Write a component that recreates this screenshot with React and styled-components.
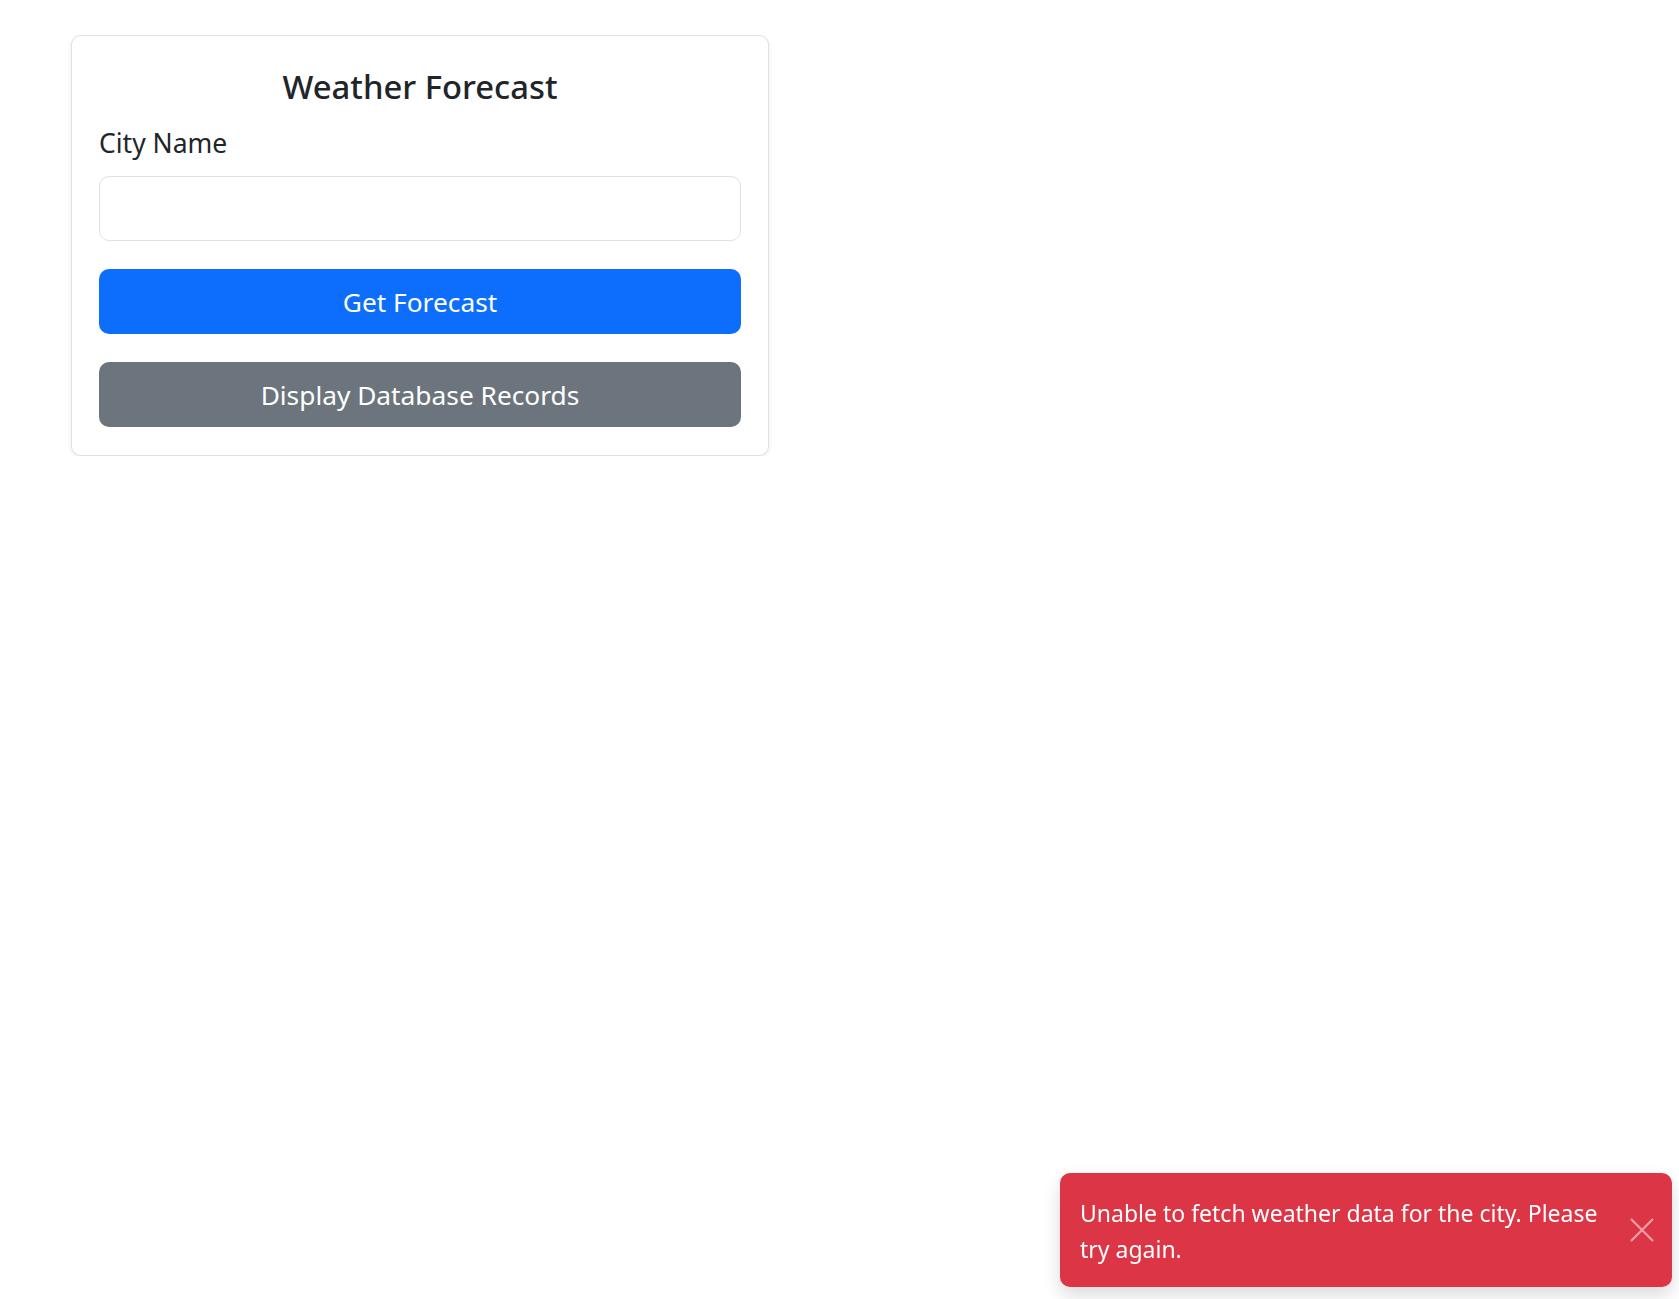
import { useState } from "react";
import styled, { createGlobalStyle } from "styled-components";

const GlobalStyle = createGlobalStyle`
  body {
    margin: 0;
    background: #fff;
    color: #212529;
    font-family: "Noto Sans", "Open Sans", sans-serif;
  }
  * {
    box-sizing: border-box;
  }
`;

const App = () => {
  const [city, setCity] = useState("");
  const [error, setError] = useState(
    "Unable to fetch weather data for the city. Please try again."
  );

  return (
    <>
      <GlobalStyle />
      <Page>
        <Card>
          <Title>Weather Forecast</Title>
          <Label htmlFor="city">City Name</Label>
          <Input
            id="city"
            type="text"
            value={city}
            onChange={(e) => setCity(e.target.value)}
          />
          <Button $variant="primary">Get Forecast</Button>
          <Button $variant="secondary">Display Database Records</Button>
        </Card>
      </Page>
      {error && (
        <Toast role="alert">
          <ToastBody>{error}</ToastBody>
          <CloseButton aria-label="Close" onClick={() => setError("")}>
            <svg width="24" height="24" viewBox="0 0 24 24">
              <path
                d="M1 1 L23 23 M23 1 L1 23"
                stroke="currentColor"
                strokeWidth="2.2"
                fill="none"
              />
            </svg>
          </CloseButton>
        </Toast>
      )}
    </>
  );
};

const Page = styled.main`
  padding: 35px 0 0 71px;
`;

const Card = styled.section`
  display: flex;
  flex-direction: column;
  width: 698px;
  padding: 30px 27px 28px;
  border: 1.33px solid #dee2e6;
  border-radius: 10px;
  box-shadow: 0 2px 5px rgba(0, 0, 0, 0.08);
  background: #fff;
`;

const Title = styled.h3`
  margin: 0 0 16px;
  text-align: center;
  font-size: 32.8px;
  font-weight: 500;
  line-height: 41px;
  color: #212529;
`;

const Label = styled.label`
  font-size: 26.5px;
  line-height: 40px;
  margin-bottom: 13px;
`;

const Input = styled.input`
  height: 65px;
  width: 100%;
  padding: 0 20px;
  font: inherit;
  font-size: 26px;
  border: 1.33px solid #dee2e6;
  border-radius: 10px;
  background: #fff;
  outline: none;
  margin-bottom: 28px;
`;

const Button = styled.button`
  height: 65px;
  width: 100%;
  border: none;
  border-radius: 10px;
  font-family: inherit;
  font-size: 26.3px;
  color: #fff;
  cursor: pointer;
  background: ${({ $variant }) =>
    $variant === "primary" ? "#0d6efd" : "#6c757d"};
  & + & {
    margin-top: 28px;
  }
`;

const Toast = styled.div`
  position: fixed;
  right: 7px;
  bottom: 12px;
  display: flex;
  align-items: center;
  width: 612px;
  background: #dc3545;
  color: #fff;
  border-radius: 10px;
  box-shadow: 0 8px 18px rgba(0, 0, 0, 0.15);
`;

const ToastBody = styled.div`
  flex: 1;
  padding: 22px 20px 20px;
  font-size: 23px;
  line-height: 36px;
`;

const CloseButton = styled.button`
  display: flex;
  flex-shrink: 0;
  margin-right: 18px;
  padding: 0;
  border: none;
  background: none;
  color: rgba(255, 255, 255, 0.52);
  cursor: pointer;
`;

export default App;
